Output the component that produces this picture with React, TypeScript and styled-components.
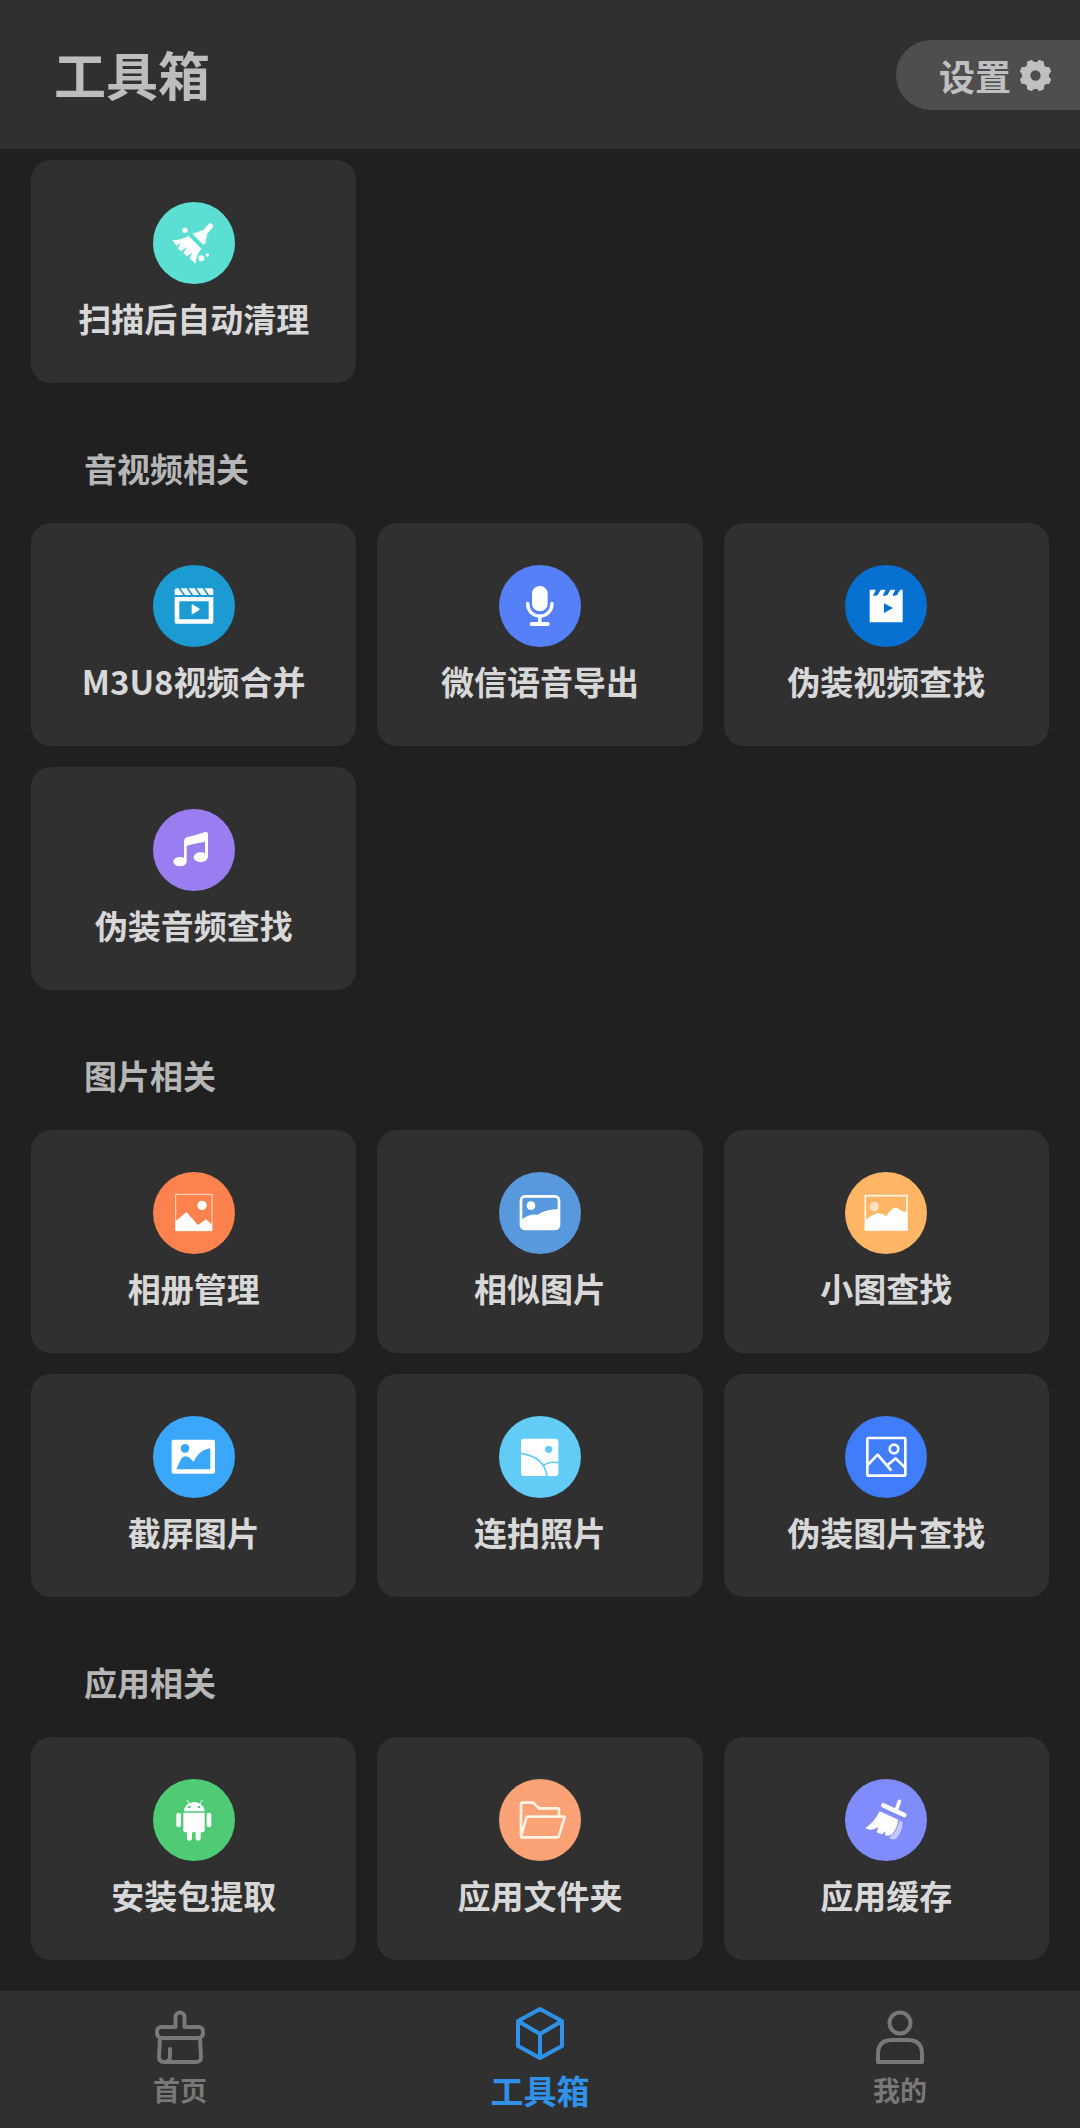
import React from "react";
import styled, { createGlobalStyle } from "styled-components";

const GlobalStyle = createGlobalStyle`
  *, *::before, *::after { box-sizing: border-box; }
  body {
    margin: 0;
    background: #202020;
    font-family: "Noto Sans CJK SC", "Noto Sans", sans-serif;
  }
  h1, h2 { margin: 0; }
  button { font-family: inherit; border: 0; cursor: pointer; }
`;

const Page = styled.div`
  display: flex;
  flex-direction: column;
  min-height: 100vh;
`;

const Header = styled.header`
  display: flex;
  align-items: flex-start;
  justify-content: space-between;
  padding: 40px 0 39px 54px;
  background: #303030;
`;

const Title = styled.h1`
  font-size: 52px;
  line-height: 68px;
  font-weight: 700;
  color: #bdbdbd;
`;

const SettingsButton = styled.button`
  display: flex;
  align-items: center;
  gap: 8px;
  padding: 0 28px 0 43px;
  border-radius: 35px 0 0 35px;
  background: #4e4e4e;
  color: #c0c0c0;
  font-size: 36px;
  line-height: 70px;
  font-weight: 700;
`;

const Main = styled.main`
  flex: 1;
  padding: 11px 31px 31px;
`;

const SectionTitle = styled.h2`
  padding: 63px 53px 32px;
  font-size: 33px;
  line-height: 45px;
  font-weight: 700;
  color: #b6b6b6;
`;

const Grid = styled.div`
  display: grid;
  grid-template-columns: repeat(3, minmax(0, 1fr));
  gap: 21px;
`;

const Card = styled.button`
  display: flex;
  flex-direction: column;
  align-items: center;
  gap: 12px;
  padding: 42px 0;
  border-radius: 20px;
  background: #303030;
  color: #d8d8d8;
  font-size: 33px;
  line-height: 45px;
  font-weight: 700;
  white-space: nowrap;
`;

const Disc = styled.svg<{ $color: string }>`
  display: block;
  width: 82px;
  height: 82px;
  border-radius: 50%;
  background: ${(p) => p.$color};
  color: ${(p) => p.$color};
`;

const TabBar = styled.nav`
  display: flex;
  background: #303030;
`;

const Tab = styled.a<{ $active?: boolean }>`
  flex: 1;
  display: flex;
  flex-direction: column;
  align-items: center;
  gap: 6px;
  padding: 15px 0 18px;
  color: ${(p) => (p.$active ? "#2f92e8" : "#787878")};
  font-size: ${(p) => (p.$active ? 33 : 27)}px;
  line-height: 40px;
  font-weight: 700;
  text-decoration: none;
`;

const TabIcon = styled.svg`
  display: block;
  width: 54px;
  height: 58px;
  fill: none;
  stroke: currentColor;
  stroke-width: 4;
  stroke-linejoin: round;
  stroke-linecap: round;
`;

type Tool = { label: string; color: string; box: string; art: React.ReactNode };
type Section = { title?: string; tools: Tool[] };

// Artwork is white; currentColor is the disc colour and is used for cut-outs.
const sections: Section[] = [
  {
    tools: [
      {
        label: "扫描后自动清理",
        color: "#5cdfd3",
        box: "38 37 246 246",
        art: (
          <>
            <circle cx="134" cy="122" r="8" />
            <path d="M210 109L192 130" stroke="#fff" strokeWidth="16" strokeLinecap="round" />
            <path d="M158 132Q176 130 184 123L200 137Q193 147 196 158L189 164Z" stroke="#fff" strokeWidth="3" strokeLinejoin="round" />
            <path d="M144 138Q124 151 96 152L108 168L120 160L113 177L122 184L140 172L129 190L140 200L156 188L148 206L166 222Q167 196 183 177Z" />
            <circle cx="183" cy="206" r="9" />
            <circle cx="201" cy="196" r="5" />
          </>
        ),
      },
    ],
  },
  {
    title: "音视频相关",
    tools: [
      {
        label: "M3U8视频合并",
        color: "#1b9bd1",
        box: "38 45 246 246",
        art: (
          <>
            <path d="M103 135V121Q103 115 109 115H213Q219 115 219 121V135Z" />
            <path d="M117 114L133 137M141 114L157 137M165 114L181 137M189 114L205 137" stroke="currentColor" strokeWidth="5" />
            <path fillRule="evenodd" d="M103 141H219V216Q219 221 214 221H108Q103 221 103 216ZM117 154V208H205V154Z" />
            <path d="M154 165Q154 161 158 164L176 175Q180 178 176 181L158 192Q154 195 154 190Z" />
          </>
        ),
      },
      {
        label: "微信语音导出",
        color: "#5680f8",
        box: "1076 45 246 246",
        art: (
          <>
            <rect x="1175" y="108" width="47" height="76" rx="23" />
            <path d="M1162 160V162A36.500 36.500 0 0 0 1235 162V160M1198.500 198V222" fill="none" stroke="#fff" strokeWidth="10" strokeLinecap="round" />
            <path d="M1174 222H1222" stroke="#fff" strokeWidth="12" strokeLinecap="round" />
          </>
        ),
      },
      {
        label: "伪装视频查找",
        color: "#0670d0",
        box: "43 45 246 246",
        art: (
          <>
            <path d="M117 119H216V217H117Z" />
            <path fill="currentColor" d="M137 117H152L141 135Q137 138 127 137ZM166 117H181L170 135Q166 138 156 137ZM195 117H210L199 135Q195 138 185 137ZM160 160L187 174L160 189Z" />
          </>
        ),
      },
      {
        label: "伪装音频查找",
        color: "#9b7df2",
        box: "38 42 246 246",
        art: (
          <>
            <ellipse cx="119" cy="200" rx="20" ry="14" />
            <ellipse cx="181" cy="187" rx="21" ry="15" />
            <path d="M131 138Q131 130 139 127Q166 121 192 112Q203 108 203 118V187H194V140Q165 144 139 152V200H131Z" />
          </>
        ),
      },
    ],
  },
  {
    title: "图片相关",
    tools: [
      {
        label: "相册管理",
        color: "#fd824e",
        box: "38 36 246 246",
        art: (
          <>
            <rect x="106" y="103" width="109" height="109" fill="none" stroke="#ffe3cf" strokeWidth="3" />
            <circle cx="185" cy="136" r="14" />
            <path d="M106 184L138 156L173 195L197 178L215 194V213H106Z" />
          </>
        ),
      },
      {
        label: "相似图片",
        color: "#5799dc",
        box: "1076 36 246 246",
        art: (
          <>
            <rect x="1142" y="109" width="114" height="98" rx="12" fill="none" stroke="#fff" strokeWidth="8" />
            <circle cx="1172" cy="137" r="13" />
            <path d="M1142 181Q1164 160 1192 164Q1216 148 1256 147V200L1250 209H1150L1142 202Z" />
          </>
        ),
      },
      {
        label: "小图查找",
        color: "#feb566",
        box: "43 36 246 246",
        art: (
          <>
            <rect x="104" y="107" width="125" height="103" fill="none" stroke="#fff8e8" strokeWidth="5" />
            <circle cx="131" cy="140" r="14" opacity=".6" />
            <path d="M104 180Q124 164 143 159Q156 160 168 169Q180 142 198 143Q210 153 229 156V211H104Z" />
          </>
        ),
      },
      {
        label: "截屏图片",
        color: "#3ba7fb",
        box: "38 45 246 246",
        art: (
          <>
            <rect x="94" y="116" width="130" height="102" rx="6" />
            <circle cx="134" cy="142" r="13" fill="currentColor" />
            <path fill="currentColor" d="M108 205C118 187 120 168 134 166C147 166 150 175 160 182C170 163 182 146 210 142V205Z" />
          </>
        ),
      },
      {
        label: "连拍照片",
        color: "#62ccf7",
        box: "1076 45 246 246",
        art: (
          <>
            <rect x="1142" y="113" width="112" height="112" rx="9" />
            <circle cx="1225" cy="145" r="11" fill="currentColor" />
            <path d="M1142 157Q1213 168 1220 226M1210 194Q1224 180 1255 185" fill="none" stroke="currentColor" strokeWidth="5" />
          </>
        ),
      },
      {
        label: "伪装图片查找",
        color: "#3f7dfb",
        box: "43 766 246 246",
        art: (
          <g fill="none" stroke="#fff" strokeWidth="8" strokeLinejoin="round">
            <rect x="110" y="832" width="114" height="113" rx="3" />
            <circle cx="190" cy="865" r="13" />
            <path d="M111 913L141 882L182 930M168 915L195 893L224 922" />
          </g>
        ),
      },
    ],
  },
  {
    title: "应用相关",
    tools: [
      {
        label: "安装包提取",
        color: "#4fcb74",
        box: "38 39 246 246",
        art: (
          <>
            <path d="M131 136A31 28 0 0 1 193 136Z" />
            <path d="M140 102L147 113M186 102L179 113" stroke="#fff" strokeWidth="3" />
            <circle cx="147" cy="123" r="4" fill="currentColor" />
            <circle cx="176" cy="123" r="4" fill="currentColor" />
            <path d="M129 140H193V193Q193 199 187 199H135Q129 199 129 193Z" />
            <rect x="140" y="190" width="15" height="34" rx="7" />
            <rect x="166" y="190" width="15" height="34" rx="7" />
            <rect x="108" y="140" width="14" height="44" rx="7" />
            <rect x="199" y="140" width="14" height="44" rx="7" />
          </>
        ),
      },
      {
        label: "应用文件夹",
        color: "#fba276",
        box: "1076 39 246 246",
        art: (
          <path d="M1142 213V115Q1142 110 1147 110H1179L1196 127H1252Q1256 127 1256 131V150M1142 213L1158 156Q1159 152 1163 152H1269Q1274 152 1272 157L1255 211Q1254 214 1251 214H1145Q1142 214 1142 210" fill="none" stroke="#fff3e4" strokeWidth="8" strokeLinejoin="round" />
        ),
      },
      {
        label: "应用缓存",
        color: "#808cfb",
        box: "43 39 246 246",
        art: (
          <>
            <path d="M206 106L197 132" stroke="#fff" strokeWidth="11" strokeLinecap="round" />
            <path d="M158 118L221 147" stroke="#fff" strokeWidth="14" strokeLinecap="round" />
            <path d="M147 136Q130 170 104 186Q114 194 129 190L143 184L138 199Q150 206 155 204L164 196L163 208Q174 211 182 206Q200 188 203 161Z" />
            <path opacity=".55" d="M207 163Q201 196 175 216Q189 225 199 215Q216 194 216 168Z" />
          </>
        ),
      },
    ],
  },
];

function GearIcon() {
  const teeth = [0, 45, 90, 135];
  return (
    <svg width="33" height="33" viewBox="-16 -16 32 32" aria-hidden="true">
      <circle r="9" fill="none" stroke="currentColor" strokeWidth="8" />
      {teeth.map((a) => (
        <path
          key={a}
          transform={`rotate(${a + 22.5})`}
          fill="currentColor"
          stroke="currentColor"
          strokeLinejoin="round"
          d="M-4 -11L-2 -15H2L4 -11ZM-4 11L-2 15H2L4 11Z"
        />
      ))}
    </svg>
  );
}

export default function App() {
  return (
    <Page>
      <GlobalStyle />
      <Header>
        <Title>工具箱</Title>
        <SettingsButton type="button">
          设置
          <GearIcon />
        </SettingsButton>
      </Header>
      <Main>
        {sections.map((section, i) => (
          <section key={i}>
            {section.title && <SectionTitle>{section.title}</SectionTitle>}
            <Grid>
              {section.tools.map((tool) => (
                <Card key={tool.label} type="button">
                  <Disc $color={tool.color} viewBox={tool.box} fill="#fff" aria-hidden="true">
                    {tool.art}
                  </Disc>
                  {tool.label}
                </Card>
              ))}
            </Grid>
          </section>
        ))}
      </Main>
      <TabBar>
        <Tab href="#home">
          <TabIcon viewBox="0 0 54 58" aria-hidden="true">
            <path d="M22.500 21V11A4.500 4.500 0 0 1 31.500 11V21H45Q50 21 50 26Q50 32 45 32H9Q4 32 4 26Q4 21 9 21ZM7 32L6 51Q6 56 11 56H43Q48 56 48 51L47 32M17 43V50Q17 55 13 56" />
          </TabIcon>
          首页
        </Tab>
        <Tab href="#tools" $active aria-current="page">
          <TabIcon viewBox="0 0 54 58" aria-hidden="true">
            <path d="M27 3L49 15V40L27 52L5 40V15ZM5 15L27 28L49 15M27 28V52" />
          </TabIcon>
          工具箱
        </Tab>
        <Tab href="#mine">
          <TabIcon viewBox="0 0 54 58" aria-hidden="true">
            <circle cx="27" cy="17" r="10.500" />
            <path d="M5 56V48Q5 34 19 34H35Q49 34 49 48V56Z" />
          </TabIcon>
          我的
        </Tab>
      </TabBar>
    </Page>
  );
}
